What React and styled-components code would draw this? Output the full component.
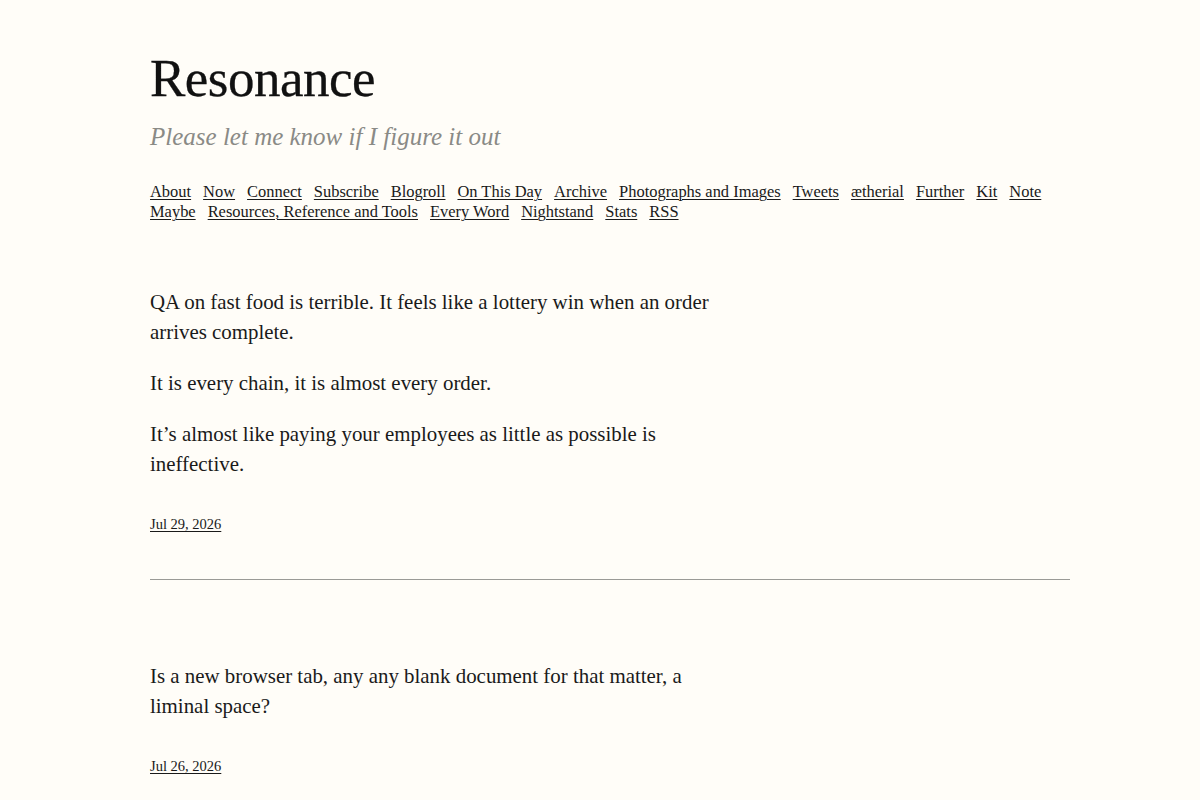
import React from "react";
import styled, { createGlobalStyle } from "styled-components";

const Global = createGlobalStyle`
  html, body {
    margin: 0;
    padding: 0;
    background: #fffdf8;
  }
  body {
    font-family: "Liberation Serif", "DejaVu Serif", serif;
    color: #1a1a1a;
  }
`;

const Page = styled.div`
  width: 920px;
  padding: 48px 130px 0 150px;
`;

const Header = styled.header`
  display: flex;
  flex-direction: column;
`;

const Title = styled.h1`
  margin: 0;
  font-size: 53px;
  line-height: 60px;
  font-weight: 400;
  color: #111111;
  letter-spacing: -0.5px;
  -webkit-text-stroke: 0.3px #111111;
`;

const Tagline = styled.p`
  margin: 9px 0 0;
  font-size: 25px;
  line-height: 40px;
  font-style: italic;
  color: #8a8a86;
`;

const Nav = styled.nav`
  display: flex;
  flex-wrap: wrap;
  column-gap: 12px;
  margin-top: 25px;
`;

const NavLink = styled.a`
  font-size: 16.45px;
  line-height: 20px;
  color: #1a1a1a;
  text-decoration: underline;
  text-underline-offset: 2px;
  text-decoration-thickness: 1px;
`;

const Feed = styled.main`
  display: flex;
  flex-direction: column;
  margin-top: 65px;
`;

const Post = styled.article`
  display: flex;
  flex-direction: column;
  padding-bottom: ${(p) => (p.$last ? "0" : "45px")};
  border-bottom: ${(p) => (p.$last ? "none" : "1px solid #9a9a96")};
  margin-bottom: ${(p) => (p.$last ? "0" : "81px")};
`;

const Body = styled.div`
  max-width: 580px;
`;

const Para = styled.p`
  margin: 0 0 21px;
  font-size: 20.9px;
  line-height: 30px;
  color: #1a1a1a;
  &:last-child {
    margin-bottom: 0;
  }
`;

const DateLink = styled.a`
  margin-top: 35px;
  align-self: flex-start;
  font-size: 14.5px;
  line-height: 20px;
  color: #1a1a1a;
  text-decoration: underline;
  text-underline-offset: 2px;
`;

const links = [
  "About",
  "Now",
  "Connect",
  "Subscribe",
  "Blogroll",
  "On This Day",
  "Archive",
  "Photographs and Images",
  "Tweets",
  "ætherial",
  "Further",
  "Kit",
  "Note",
  "Maybe",
  "Resources, Reference and Tools",
  "Every Word",
  "Nightstand",
  "Stats",
  "RSS",
];

const posts = [
  {
    date: "Jul 29, 2026",
    paras: [
      "QA on fast food is terrible. It feels like a lottery win when an order arrives complete.",
      "It is every chain, it is almost every order.",
      "It’s almost like paying your employees as little as possible is ineffective.",
    ],
  },
  {
    date: "Jul 26, 2026",
    paras: [
      "Is a new browser tab, any any blank document for that matter, a liminal space?",
    ],
  },
];

export default function App() {
  return (
    <>
      <Global />
      <Page>
        <Header>
          <Title>Resonance</Title>
          <Tagline>Please let me know if I figure it out</Tagline>
          <Nav>
            {links.map((l) => (
              <NavLink key={l} href="#">
                {l}
              </NavLink>
            ))}
          </Nav>
        </Header>
        <Feed>
          {posts.map((p, i) => (
            <Post key={p.date} $last={i === posts.length - 1}>
              <Body>
                {p.paras.map((t) => (
                  <Para key={t}>{t}</Para>
                ))}
              </Body>
              <DateLink href="#">{p.date}</DateLink>
            </Post>
          ))}
        </Feed>
      </Page>
    </>
  );
}
